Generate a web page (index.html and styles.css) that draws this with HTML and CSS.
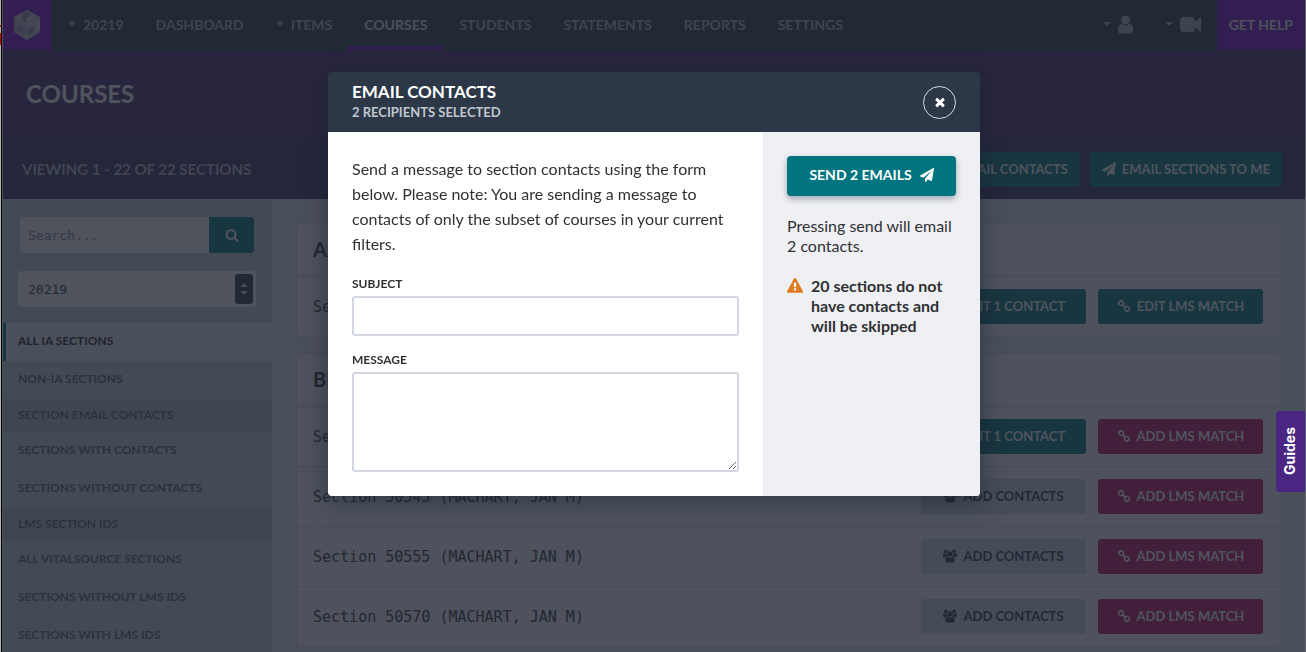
FILE: index.html
```html
<!DOCTYPE html>
<html lang="en">
<head>
    <meta charset="UTF-8">
    <meta name="viewport" content="width=device-width, initial-scale=1.0">
    <title>Courses</title>
    <link rel="stylesheet" href="styles.css">
</head>
<body>
    <!-- Icon set -->
    <svg class="sprite" aria-hidden="true">
        <symbol id="i-plane" viewBox="0 0 1792 1792"><path d="M1764 11q33 24 27 64l-256 1536q-5 29-32 45-14 8-31 8-11 0-24-5l-453-185-242 295q-18 23-49 23-13 0-22-4-19-7-30.500-23.500t-11.500-36.500v-349l864-1059-1069 925-395-162q-37-14-40-55-2-40 32-59l1664-960q15-9 32-9 20 0 36 11z"/></symbol>
        <symbol id="i-search" viewBox="0 0 1792 1792"><path d="M1216 832q0-185-131.500-316.500t-316.500-131.500-316.500 131.500-131.500 316.500 131.500 316.500 316.500 131.500 316.500-131.500 131.500-316.500zm512 832q0 52-38 90t-90 38q-54 0-90-38l-343-342q-179 124-399 124-143 0-273.500-55.500t-225-150-150-225-55.500-273.500 55.500-273.500 150-225 225-150 273.500-55.500 273.500 55.500 225 150 150 225 55.500 273.500q0 220-124 399l343 343q37 37 37 90z"/></symbol>
        <symbol id="i-user" viewBox="256 0 1280 1792"><path d="M1536 1399q0 109-62.500 187t-150.500 78h-854q-88 0-150.500-78t-62.500-187q0-85 8.500-160.500t31.500-152 58.500-131 94-89 134.500-34.500q131 128 313 128t313-128q76 0 134.500 34.500t94 89 58.500 131 31.500 152 8.500 160.500zm-256-887q0 159-112.500 271.500t-271.500 112.500-271.500-112.500-112.500-271.500 112.500-271.500 271.500-112.500 271.500 112.500 112.500 271.500z"/></symbol>
        <symbol id="i-video" viewBox="0 0 1792 1792"><path d="M1792 352v1088q0 42-39 59-13 5-25 5-27 0-45-19l-403-403v166q0 119-84.500 203.500t-203.500 84.500h-704q-119 0-203.500-84.500t-84.500-203.500v-704q0-119 84.500-203.500t203.500-84.500h704q119 0 203.500 84.500t84.500 203.500v165l403-402q18-19 45-19 12 0 25 5 39 17 39 59z"/></symbol>
        <symbol id="i-close" viewBox="0 0 1792 1792"><path d="M1490 1322q0 40-28 68l-136 136q-28 28-68 28t-68-28l-294-294-294 294q-28 28-68 28t-68-28l-136-136q-28-28-28-68t28-68l294-294-294-294q-28-28-28-68t28-68l136-136q28-28 68-28t68 28l294 294 294-294q28-28 68-28t68 28l136 136q28 28 28 68t-28 68l-294 294 294 294q28 28 28 68z"/></symbol>
        <symbol id="i-warning" viewBox="0 0 1792 1792"><path d="M1024 1375v-190q0-14-9.500-23.500t-22.500-9.500h-192q-13 0-22.500 9.500t-9.500 23.500v190q0 14 9.500 23.500t22.500 9.500h192q13 0 22.500-9.500t9.500-23.500zm-2-374l18-459q0-12-10-19-13-11-24-11h-220q-11 0-24 11-10 7-10 21l17 457q0 10 10 16.500t24 6.500h185q14 0 23.500-6.500t10.500-16.500zm-14-934l768 1408q35 63-2 126-17 29-46.500 46t-63.500 17h-1536q-34 0-63.500-17t-46.500-46q-37-63-2-126l768-1408q17-31 47-49t65-18 65 18 47 49z"/></symbol>
        <symbol id="i-link" viewBox="0 0 14 14"><g fill="none" stroke="currentColor" stroke-width="1.500"><rect x="1.800" y="2" width="4.800" height="4.400" rx="2" transform="rotate(45 4.200 4.200)"/><rect x="7.400" y="7.600" width="4.800" height="4.400" rx="2" transform="rotate(45 9.800 9.800)"/><path d="M5.600 5.600l2.800 2.800" stroke-linecap="round"/></g></symbol>
        <symbol id="i-users" viewBox="0 0 14 13"><circle cx="2.800" cy="1.900" r="1.800"/><circle cx="11.200" cy="1.900" r="1.800"/><path d="M0 6.300c0-1.500.4-2.500 1.300-2.500.9.600 1.700.7 2.500.4-.2 1 .1 2 .7 2.700-.9 0-1.600.3-2.200.8h-1c-.8 0-1.300-.5-1.300-1.400zM14 6.300c0-1.500-.4-2.500-1.300-2.500-.9.600-1.700.7-2.500.4.200 1-.1 2-.7 2.700.9 0 1.600.3 2.200.8h1c.8 0 1.300-.5 1.300-1.400z"/><circle cx="7" cy="4.400" r="2.700"/><path d="M2.300 11c0-2.200.6-3.700 2.200-3.700 1.600 1.200 3.400 1.200 5 0 1.600 0 2.200 1.500 2.200 3.700 0 1.300-.7 2-1.800 2H4.100c-1.100 0-1.800-.7-1.800-2z"/></symbol>
        <symbol id="i-caret" viewBox="0 0 8 4"><path d="M0 0h8L4 4z"/></symbol>
        <symbol id="i-sort" viewBox="0 0 8 14"><path d="M4 1l3.500 4h-7zM4 13l3.500-4h-7z"/></symbol>
    </svg>

    <div class="app">
        <nav class="navbar">
            <a class="logo" href="#" aria-label="Home">
                <svg width="26" height="30" viewBox="0 0 26 30">
                    <path fill="#c9c6d4" d="M13 0l13 7v15l-13 8L0 22V7z"/>
                    <path fill="#b9b3cb" d="M0 7l13 8v15L0 22z"/>
                    <path fill="#9a8fb8" d="M8 4l5-2 5 3-5 3zM8 4l5 4v5l-5-3zM4 16l5 2v5l-5-3zM14 19l6-3v6l-6 4z"/>
                    <path fill="#dad8e2" d="M22 13l4-2v7l-4 3zM13 8l5-3v4l-5 3z"/>
                </svg>
            </a>
            <a class="nav-item" href="#"><svg class="caret"><use href="#i-caret"/></svg>20219</a>
            <a class="nav-item" href="#">DASHBOARD</a>
            <a class="nav-item" href="#"><svg class="caret"><use href="#i-caret"/></svg>ITEMS</a>
            <a class="nav-item active" href="#">COURSES</a>
            <a class="nav-item" href="#">STUDENTS</a>
            <a class="nav-item" href="#">STATEMENTS</a>
            <a class="nav-item" href="#">REPORTS</a>
            <a class="nav-item" href="#">SETTINGS</a>
            <div class="nav-right">
                <a class="nav-item" href="#" aria-label="Account"><svg class="caret"><use href="#i-caret"/></svg><svg class="nav-icon user"><use href="#i-user"/></svg></a>
                <a class="nav-item" href="#" aria-label="Videos"><svg class="caret"><use href="#i-caret"/></svg><svg class="nav-icon"><use href="#i-video"/></svg></a>
                <a class="get-help" href="#">GET HELP</a>
            </div>
        </nav>

        <header class="page-header">
            <h1>COURSES</h1>
        </header>
        <div class="toolbar">
            <h2>VIEWING 1 - 22 OF 22 SECTIONS</h2>
            <div class="toolbar-buttons">
                <button class="btn teal"><svg class="icon"><use href="#i-plane"/></svg>EMAIL CONTACTS</button>
                <button class="btn teal"><svg class="icon"><use href="#i-plane"/></svg>EMAIL SECTIONS TO ME</button>
            </div>
        </div>

        <div class="columns">
            <aside class="sidebar">
                <form class="filters">
                    <div class="search">
                        <input type="text" placeholder="Search..." aria-label="Search">
                        <button type="button" aria-label="Search"><svg class="icon"><use href="#i-search"/></svg></button>
                    </div>
                    <div class="select">
                        <select aria-label="Term">
                            <option>20219</option>
                        </select>
                        <span class="select-arrows"><svg width="8" height="14"><use href="#i-sort"/></svg></span>
                    </div>
                </form>
                <a class="side-link active" href="#">ALL IA SECTIONS</a>
                <a class="side-link" href="#">NON-IA SECTIONS</a>
                <h3>SECTION EMAIL CONTACTS</h3>
                <a class="side-link" href="#">SECTIONS WITH CONTACTS</a>
                <a class="side-link" href="#">SECTIONS WITHOUT CONTACTS</a>
                <h3>LMS SECTION IDS</h3>
                <a class="side-link" href="#">ALL VITALSOURCE SECTIONS</a>
                <a class="side-link" href="#">SECTIONS WITHOUT LMS IDS</a>
                <a class="side-link" href="#">SECTIONS WITH LMS IDS</a>
            </aside>

            <main class="content">
                <section class="card">
                    <h2>AA</h2>
                    <div class="row">
                        <span>Section 50510 (MACHART, JAN M)</span>
                        <button class="btn teal"><svg class="icon"><use href="#i-users"/></svg>EDIT 1 CONTACT</button>
                        <button class="btn teal"><svg class="icon"><use href="#i-link"/></svg>EDIT LMS MATCH</button>
                    </div>
                </section>
                <section class="card">
                    <h2>BIO</h2>
                    <div class="row">
                        <span>Section 50540 (MACHART, JAN M)</span>
                        <button class="btn teal"><svg class="icon"><use href="#i-users"/></svg>EDIT 1 CONTACT</button>
                        <button class="btn pink"><svg class="icon"><use href="#i-link"/></svg>ADD LMS MATCH</button>
                    </div>
                    <div class="row">
                        <span>Section 50545 (MACHART, JAN M)</span>
                        <button class="btn grey"><svg class="icon"><use href="#i-users"/></svg>ADD CONTACTS</button>
                        <button class="btn pink"><svg class="icon"><use href="#i-link"/></svg>ADD LMS MATCH</button>
                    </div>
                    <div class="row">
                        <span>Section 50555 (MACHART, JAN M)</span>
                        <button class="btn grey"><svg class="icon"><use href="#i-users"/></svg>ADD CONTACTS</button>
                        <button class="btn pink"><svg class="icon"><use href="#i-link"/></svg>ADD LMS MATCH</button>
                    </div>
                    <div class="row">
                        <span>Section 50570 (MACHART, JAN M)</span>
                        <button class="btn grey"><svg class="icon"><use href="#i-users"/></svg>ADD CONTACTS</button>
                        <button class="btn pink"><svg class="icon"><use href="#i-link"/></svg>ADD LMS MATCH</button>
                    </div>
                </section>
            </main>
        </div>
    </div>

    <div class="overlay">
        <div class="modal" role="dialog" aria-labelledby="modal-title">
            <div class="modal-header">
                <div>
                    <h2 id="modal-title">EMAIL CONTACTS</h2>
                    <p>2 RECIPIENTS SELECTED</p>
                </div>
                <button class="close" aria-label="Close"><svg class="icon"><use href="#i-close"/></svg></button>
            </div>
            <div class="modal-body">
                <form class="modal-form">
                    <p>Send a message to section contacts using the form below. Please note: You are sending a message to contacts of only the subset of courses in your current filters.</p>
                    <label for="subject">SUBJECT</label>
                    <input type="text" id="subject">
                    <label for="message">MESSAGE</label>
                    <textarea id="message"></textarea>
                </form>
                <div class="modal-side">
                    <button class="send">SEND 2 EMAILS<svg class="icon"><use href="#i-plane"/></svg></button>
                    <p>Pressing send will email 2 contacts.</p>
                    <div class="warning">
                        <svg width="16" height="16"><use href="#i-warning"/></svg>
                        <strong>20 sections do not have contacts and will be skipped</strong>
                    </div>
                </div>
            </div>
        </div>
    </div>

    <button class="guides">Guides</button>
    <div class="window-edge"></div>
</body>
</html>
```

FILE: styles.css
```css
* {
    box-sizing: border-box;
}
body {
    margin: 0;
    height: 100vh;
    overflow: hidden;
    background: #5f636c;
    font-family: Lato, "Open Sans", sans-serif;
    color: #2f3133;
}
h1, h2, h3, p {
    margin: 0;
}
a {
    color: inherit;
    text-decoration: none;
}
button, input, select, textarea {
    font: inherit;
    margin: 0;
    border: 0;
}
svg {
    fill: currentColor;
    flex: none;
}
.sprite {
    position: absolute;
    width: 0;
    height: 0;
}
.icon {
    width: 14px;
    height: 14px;
}
.app {
    margin: 0 1px 0 3px;
    height: 100vh;
    overflow: hidden;
    background: #edeef3;
}

/* Navigation */
.navbar {
    display: flex;
    height: 50px;
    background: #2c3848;
    color: #b5bac3;
    font-size: 14px;
    font-weight: 700;
}
.logo {
    display: flex;
    align-items: center;
    justify-content: center;
    width: 49px;
    padding-right: 1px;
    background: #7b08c4;
}
.nav-item {
    display: flex;
    align-items: center;
    gap: 7px;
    padding: 0 16px;
    border-top: 2px solid transparent;
    border-bottom: 4px solid transparent;
}
.nav-item.active {
    color: #eceef2;
    border-bottom-color: #7b08c4;
}
.caret {
    width: 8px;
    height: 4px;
}
.nav-icon {
    width: 21px;
    height: 21px;
}
.nav-icon.user {
    width: 15px;
}
.nav-right {
    display: flex;
    margin-left: auto;
}
.get-help {
    display: flex;
    align-items: center;
    padding: 0 12px 2px;
    background: #7b08c4;
    color: #eceef2;
}

/* Page header */
.page-header {
    display: flex;
    align-items: center;
    height: 90px;
    padding: 0 23px 4px;
    background: #4f2d73;
    color: #fff;
}
.page-header h1 {
    font-size: 24px;
}
.toolbar {
    display: flex;
    align-items: center;
    justify-content: space-between;
    height: 59px;
    padding: 0 23px 0 19px;
    background: #3a2e66;
    color: #b9b8c9;
}
.toolbar h2 {
    padding-bottom: 2px;
    font-size: 15px;
}
.toolbar-buttons {
    display: flex;
    gap: 10px;
}
.toolbar-buttons .btn {
    width: auto;
    padding: 0 12px 2px;
}
.btn {
    display: flex;
    align-items: center;
    justify-content: center;
    gap: 6px;
    width: 165px;
    height: 35px;
    padding: 0 0 2px;
    border-radius: 3px;
    font-size: 13px;
    font-weight: 700;
    white-space: nowrap;
}
.btn.teal {
    background: #00757f;
    color: #fff;
}
.btn.pink {
    background: #c70a63;
    color: #fff;
}
.btn.grey {
    background: #d3dbe5;
    color: #2c3848;
}

/* Sidebar */
.columns {
    display: flex;
}
.sidebar {
    flex: none;
    width: 269px;
    background: #c8d2dc;
    color: #5b6270;
    font-size: 12px;
    font-weight: 700;
}
.filters {
    display: grid;
    gap: 18px;
    padding: 18px 16px 16px 15px;
    font: 13px "DejaVu Sans Mono", monospace;
}
.search {
    display: flex;
    padding: 0 2px;
}
.search input {
    flex: 1;
    min-width: 0;
    height: 36px;
    padding: 0 8px;
    border-radius: 3px 0 0 3px;
    background: #fff;
}
.search input::placeholder {
    color: #7f858f;
}
.search button {
    display: flex;
    align-items: center;
    justify-content: center;
    width: 45px;
    border-radius: 0 3px 3px 0;
    background: #00757f;
    color: #fff;
}
.select {
    position: relative;
}
.select select {
    width: 100%;
    height: 36px;
    padding: 0 10px;
    border-radius: 3px;
    appearance: none;
    background: #fff;
    color: #2f3133;
}
.select-arrows {
    position: absolute;
    top: 3px;
    right: 3px;
    display: flex;
    align-items: center;
    justify-content: center;
    width: 18px;
    height: 30px;
    border-radius: 3px;
    background: #2c3848;
    color: #e4e8ee;
    pointer-events: none;
}
.side-link {
    display: flex;
    align-items: center;
    height: 38px;
    padding: 0 15px 3px;
}
.side-link.active {
    padding-left: 12px;
    border-left: 3px solid #00757f;
    background: #edeef3;
    color: #1c1f26;
}
.sidebar h3 {
    display: flex;
    align-items: center;
    height: 33px;
    padding: 0 15px 2px;
    background: #b8c2cd;
    font-size: 12px;
}

/* Section cards */
.content {
    flex: 1;
    display: grid;
    gap: 16px;
    align-content: start;
    padding: 24px 23px 24px 24px;
}
.card {
    border: 1px solid #d4d8e6;
    border-radius: 4px;
    background: #fafafc;
}
.card h2 {
    height: 52px;
    padding: 0 16px;
    font-size: 20px;
    line-height: 50px;
}
.row {
    display: flex;
    align-items: center;
    gap: 12px;
    padding: 12px 18px 12px 16px;
    border-top: 1px solid #d4d8e6;
    font: 15px "DejaVu Sans Mono", monospace;
}
.row span {
    flex: 1;
}
.row .btn {
    font-family: Lato, "Open Sans", sans-serif;
}

/* Modal */
.overlay {
    position: fixed;
    inset: 0 1px 0 3px;
    display: flex;
    align-items: flex-start;
    justify-content: center;
    padding-top: 72px;
    background: rgba(31, 37, 48, 0.79);
}
.modal {
    width: 652px;
    border-radius: 4px;
    overflow: hidden;
    box-shadow: 0 4px 24px rgba(20, 30, 42, 0.5);
}
.modal-header {
    display: flex;
    align-items: center;
    justify-content: space-between;
    height: 60px;
    padding: 0 24px;
    background: #2c3848;
    color: #fff;
}
.modal-header h2 {
    font-size: 17px;
    line-height: 20px;
}
.modal-header p {
    color: #c1c6cd;
    font-size: 13px;
    font-weight: 700;
    line-height: 20px;
}
.close {
    display: flex;
    align-items: center;
    justify-content: center;
    width: 33px;
    height: 33px;
    padding: 0;
    border: 1px solid #d8dbe0;
    border-radius: 50%;
    background: none;
    color: #fff;
}
.modal-body {
    display: flex;
    background: #fff;
}
.modal-form {
    flex: 2;
    display: flex;
    flex-direction: column;
    padding: 24px;
}
.modal-form p {
    margin-bottom: 4px;
    font-size: 16px;
    line-height: 25px;
}
.modal-form label {
    margin: 16px 0 4px;
    font-size: 12px;
    font-weight: 700;
    line-height: 16px;
}
.modal-form input, .modal-form textarea {
    height: 40px;
    padding: 8px;
    border: 2px solid #d2d6e3;
    border-radius: 3px;
    background: #fff;
}
.modal-form textarea {
    height: 100px;
}
.modal-side {
    display: flex;
    flex-direction: column;
    gap: 20px;
    width: 217px;
    padding: 24px;
    background: #eff0f4;
    font-size: 16px;
    line-height: 20px;
}
.send {
    display: flex;
    align-items: center;
    justify-content: center;
    gap: 8px;
    height: 40px;
    padding-bottom: 3px;
    border-radius: 4px;
    background: #00757f;
    box-shadow: 0 3px 6px rgba(44, 56, 72, 0.4);
    color: #fff;
    font-size: 14px;
    font-weight: 700;
}
.warning {
    display: flex;
    gap: 8px;
}
.warning svg {
    color: #e07a1a;
    margin-top: 2px;
}

.guides {
    position: fixed;
    right: 1px;
    top: 411px;
    width: 29px;
    height: 81px;
    padding: 0 2px 0 0;
    border-radius: 4px 0 0 4px;
    background: #4b2582;
    color: #fff;
    font: bold 14px Inter, sans-serif;
    writing-mode: sideways-lr;
}

/* Sliver of the window behind, with its red markers */
.window-edge {
    position: fixed;
    inset: 0 auto 0 0;
    width: 3px;
    background:
        linear-gradient(#c01208, #c01208) 0 25px / 1px 2px no-repeat,
        linear-gradient(#c01208, #c01208) 0 33px / 1px 12px no-repeat,
        linear-gradient(to right, #b5b5b5 1px, #000 1px 2px, #4d5159 2px);
}
```
